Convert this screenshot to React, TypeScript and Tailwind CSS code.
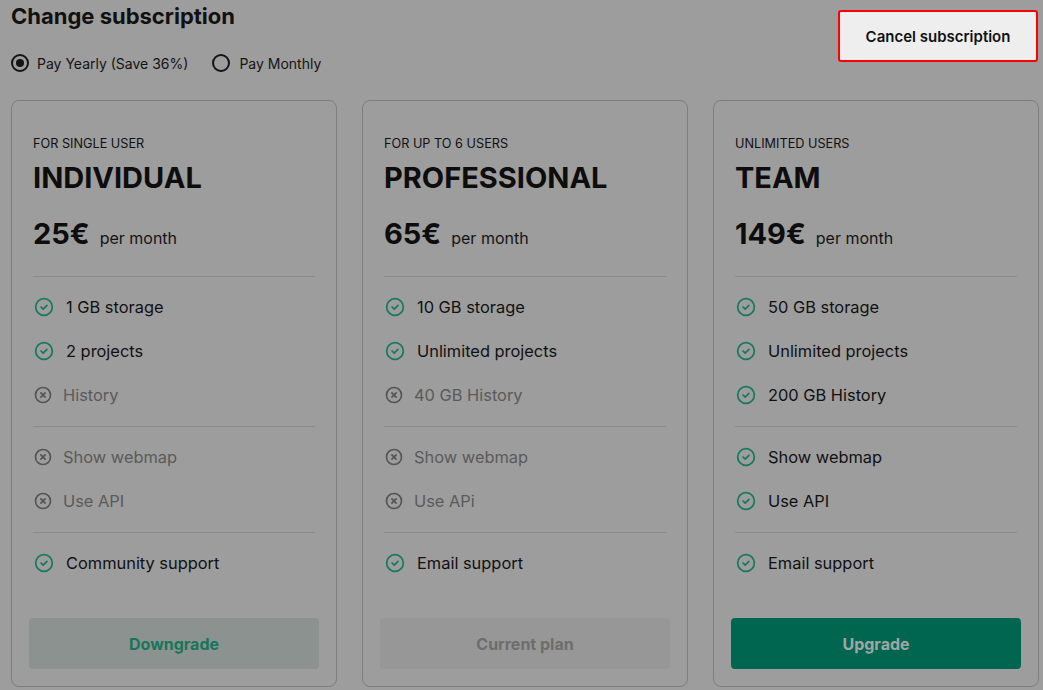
import React from "react";

type Feature = { label: string; ok: boolean };
type Plan = {
  tag: string;
  name: string;
  price: string;
  groups: Feature[][];
  button: string;
  kind: "down" | "current" | "up";
};

const plans: Plan[] = [
  {
    tag: "FOR SINGLE USER",
    name: "INDIVIDUAL",
    price: "25€",
    groups: [
      [
        { label: "1 GB storage", ok: true },
        { label: "2 projects", ok: true },
        { label: "History", ok: false },
      ],
      [
        { label: "Show webmap", ok: false },
        { label: "Use API", ok: false },
      ],
      [{ label: "Community support", ok: true }],
    ],
    button: "Downgrade",
    kind: "down",
  },
  {
    tag: "FOR UP TO 6 USERS",
    name: "PROFESSIONAL",
    price: "65€",
    groups: [
      [
        { label: "10 GB storage", ok: true },
        { label: "Unlimited projects", ok: true },
        { label: "40 GB History", ok: false },
      ],
      [
        { label: "Show webmap", ok: false },
        { label: "Use APi", ok: false },
      ],
      [{ label: "Email support", ok: true }],
    ],
    button: "Current plan",
    kind: "current",
  },
  {
    tag: "UNLIMITED USERS",
    name: "TEAM",
    price: "149€",
    groups: [
      [
        { label: "50 GB storage", ok: true },
        { label: "Unlimited projects", ok: true },
        { label: "200 GB History", ok: true },
      ],
      [
        { label: "Show webmap", ok: true },
        { label: "Use API", ok: true },
      ],
      [{ label: "Email support", ok: true }],
    ],
    button: "Upgrade",
    kind: "up",
  },
];

function CheckIcon() {
  return (
    <svg width="20" height="20" viewBox="0 0 24 24" fill="none" stroke="#177a5c" strokeWidth="2.1" strokeLinecap="round" strokeLinejoin="round" className="ml-[1px] mr-[12px] shrink-0">
      <circle cx="12" cy="12" r="10" />
      <path d="m8.5 12 2.5 2.5 4.5-4.5" />
    </svg>
  );
}

function XIcon() {
  return (
    <svg width="18" height="18" viewBox="0 0 24 24" fill="none" stroke="#555555" strokeWidth="2.2" strokeLinecap="round" strokeLinejoin="round" className="ml-[1px] mr-[11px] shrink-0">
      <circle cx="12" cy="12" r="10" />
      <path d="m14.8 9.2-5.6 5.6" />
      <path d="m9.2 9.2 5.6 5.6" />
    </svg>
  );
}

function Card({ plan }: { plan: Plan }) {
  const btnClass =
    plan.kind === "down"
      ? "bg-[#8c928f] text-[#17765a]"
      : plan.kind === "current"
      ? "bg-[#979797] text-[#6d6d6d]"
      : "bg-[#006650] text-[#a1a5a3]";
  return (
    <div className="flex h-[587px] w-[326px] shrink-0 flex-col rounded-[8px] border border-[#7e7e7e] px-[17px] pb-[17px]">
      <div className="px-[4px]">
        <div className="pt-[35px] text-[12.7px] leading-[16px] text-[#111]">{plan.tag}</div>
        <div className="mt-[9px] text-[29px] font-bold leading-[34px] text-[#0d0d0d]">{plan.name}</div>
        <div className="mt-[22px] flex items-baseline leading-[34px]">
          <span className="text-[29px] font-bold text-[#0d0d0d]">{plan.price}</span>
          <span className="ml-[10px] text-[16px] text-[#141414]">per month</span>
        </div>
        <div className="mt-[21px]">
          {plan.groups.map((g, gi) => (
            <div key={gi} className={`border-t border-[#8a8a8a] ${gi === 2 ? "pt-[8px]" : "pt-[8px] pb-[9px]"}`}>
              {g.map((f) => (
                <div key={f.label} className="flex h-[44px] items-center">
                  {f.ok ? <CheckIcon /> : <XIcon />}
                  <span className={`text-[16.4px] ${f.ok ? "text-[#111]" : "text-[#5a5a5a]"}`}>{f.label}</span>
                </div>
              ))}
            </div>
          ))}
        </div>
      </div>
      <button className={`mt-auto flex h-[51px] w-full items-center justify-center rounded-[4px] text-[16px] font-bold ${btnClass}`}>
        {plan.button}
      </button>
    </div>
  );
}

export default function App() {
  return (
    <div
      className="h-[690px] w-[1043px] overflow-hidden bg-[#9d9d9d] pl-[11px] pr-[4px]"
      style={{ fontFamily: "Inter, 'Noto Sans', sans-serif" }}
    >
      <div className="flex items-start justify-between">
        <div>
          <h1 className="pt-[2px] text-[22px] font-bold leading-[28px] text-[#111]">Change subscription</h1>
          <div className="mt-[24px] flex h-[18px] items-center text-[14px] text-[#141414]">
            <span className="flex h-[18px] w-[18px] items-center justify-center rounded-full border-2 border-[#141414]">
              <span className="h-[8px] w-[8px] rounded-full bg-[#141414]" />
            </span>
            <span className="ml-[8px]">Pay Yearly (Save 36%)</span>
            <span className="ml-[24px] h-[18px] w-[18px] rounded-full border-2 border-[#141414]" />
            <span className="ml-[9px]">Pay Monthly</span>
          </div>
        </div>
        <button className="mt-[10px] mr-[1px] h-[52px] w-[200px] rounded-[3px] border-2 border-[#ff0000] bg-[#eeeeee] pt-[2px] text-[15px] font-semibold text-[#111]">
          Cancel subscription
        </button>
      </div>
      <div className="mt-[28px] flex gap-[25px]">
        {plans.map((p) => (
          <Card key={p.name} plan={p} />
        ))}
      </div>
    </div>
  );
}
